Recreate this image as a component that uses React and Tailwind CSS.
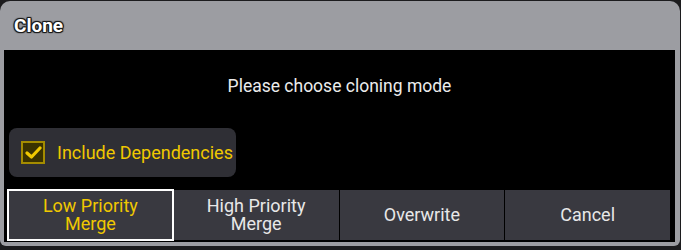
import React from 'react';

const BUTTONS = [
  { label: ['Low Priority', 'Merge'], active: true },
  { label: ['High Priority', 'Merge'] },
  { label: ['Overwrite'] },
  { label: ['Cancel'] },
];

function CheckMark() {
  return (
    <svg width="17" height="15" viewBox="0 0 17 15" fill="none">
      <path d="M2 8 L6.5 12 L15 3" stroke="#f0c800" strokeWidth="3.2" strokeLinecap="round" strokeLinejoin="round" />
    </svg>
  );
}

export default function App() {
  return (
    <div className="w-[681px] h-[250px] bg-[#1c1c1e] pt-px" style={{ fontFamily: 'Roboto, "Liberation Sans", sans-serif' }}>
      <div className="w-[680px] h-[245px] bg-[#9c9da2] rounded-t-[10px] rounded-b-[6px] flex flex-col pl-[4px] pr-[5px] pb-[4px]">
        <div className="h-[49px] flex items-center pl-[10px] shrink-0">
          <span className="text-white font-bold text-[19px] leading-none [text-shadow:1px_0_0_#1a1a1a,-1px_0_0_#1a1a1a,0_1px_0_#1a1a1a,0_-1px_0_#1a1a1a,1px_1px_1px_#1a1a1a,-1px_-1px_1px_#1a1a1a,1px_-1px_1px_#1a1a1a,-1px_1px_1px_#1a1a1a]">
            Clone
          </span>
        </div>
        <div className="flex-1 bg-black flex flex-col">
          <div className="h-[72px] flex items-center justify-center text-[#ececec] text-[17.5px]">
            Please choose cloning mode
          </div>
          <div className="mt-[6px] ml-[5px] w-[227px] h-[49px] rounded-[8px] bg-[#2f2f35] flex items-center pl-[12px]">
            <div className="w-[24px] h-[23px] border-2 border-[#a48c00] bg-[#3a3200] flex items-center justify-center">
              <CheckMark />
            </div>
            <span className="ml-[12px] text-[#f0c800] text-[18px]">Include Dependencies</span>
          </div>
          <div className="mt-[13px] ml-[4px] mr-[5px] h-[50px] grid grid-cols-4 gap-px">
            {BUTTONS.map((b, i) => (
              <div
                key={i}
                className={
                  'bg-[#393940] flex flex-col items-center justify-center text-[18px] leading-[18px] ' +
                  (b.active ? 'text-[#f0c800] outline-2 outline-white -outline-offset-1' : 'text-[#e8e8e8]')
                }
              >
                {b.label.map((l) => (
                  <span key={l}>{l}</span>
                ))}
              </div>
            ))}
          </div>
        </div>
      </div>
    </div>
  );
}
